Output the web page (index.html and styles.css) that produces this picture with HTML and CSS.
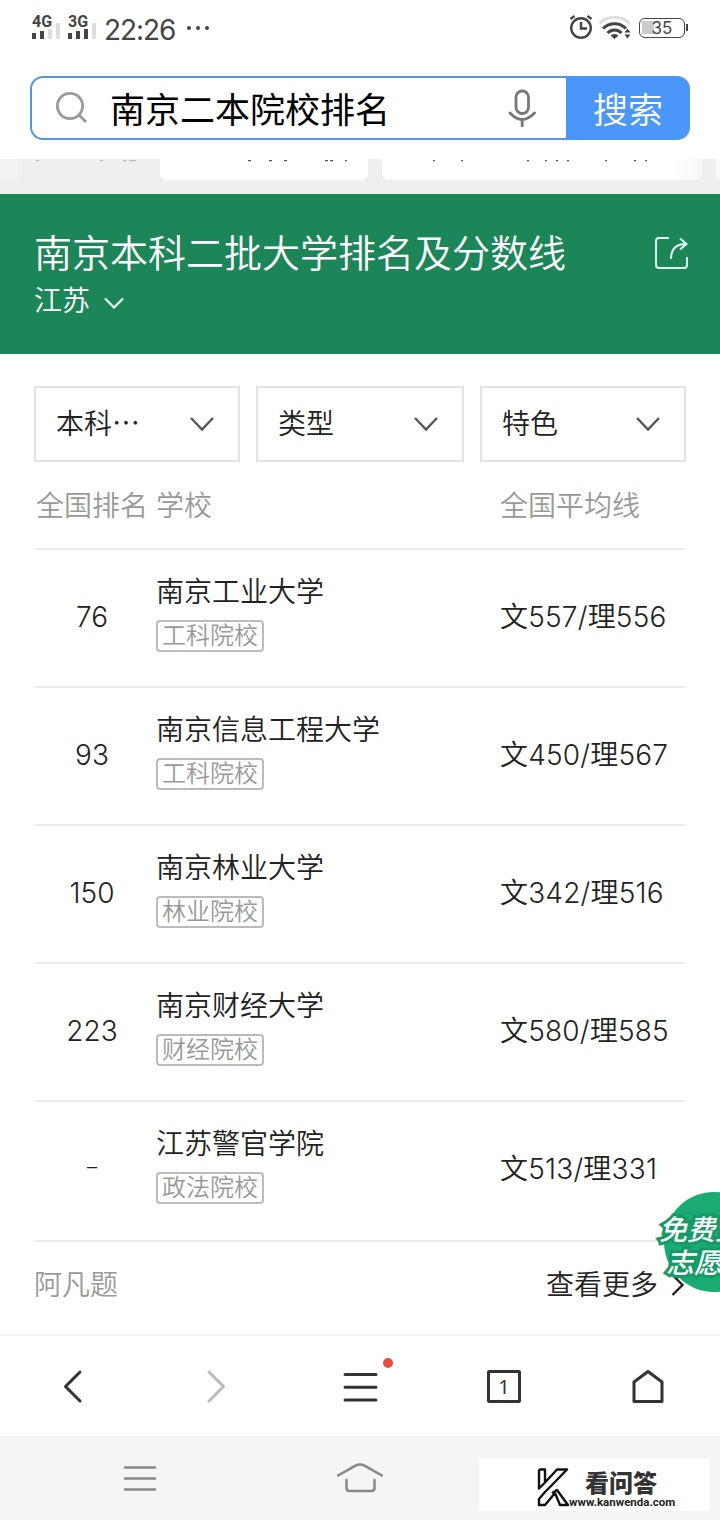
FILE: index.html
```html
<!DOCTYPE html>
<html lang="zh-CN">
<head>
    <meta charset="UTF-8">
    <meta name="viewport" content="width=device-width, initial-scale=1.0">
    <title>南京二本院校排名</title>
    <link rel="stylesheet" href="styles.css">
</head>
<body>
    <header class="status">
        <div class="signal">
            <span>4G</span>
            <svg width="28" height="18" viewBox="0 0 28 18"><path d="M2 12v6M10 10v8" stroke="#444" stroke-width="4"/><path d="M18 8v10M26 2v16" stroke="#ddd" stroke-width="4"/></svg>
        </div>
        <div class="signal">
            <span>3G</span>
            <svg width="28" height="18" viewBox="0 0 28 18"><path d="M2 12v6M10 10v8M18 8v10" stroke="#444" stroke-width="4"/><path d="M26 2v16" stroke="#ddd" stroke-width="4"/></svg>
        </div>
        <time>22:26</time>
        <svg class="more-dots" width="22" height="6" viewBox="0 0 22 6" fill="#444"><circle cx="2" cy="3" r="2"/><circle cx="11" cy="3" r="2"/><circle cx="20" cy="3" r="2"/></svg>
        <svg class="alarm" width="24" height="26" viewBox="0 0 24 26" fill="none" stroke="#444" stroke-width="2.4"><circle cx="12" cy="14" r="9.8"/><path d="M12 8v6.5h6M1.500 5l4-3M22.500 5l-4-3"/></svg>
        <svg class="wifi" width="34" height="26" viewBox="0 0 34 26" fill="none" stroke-width="3"><path d="M1.500 8.500C9.500 0 23.500 0 31.500 8.500" stroke="#ddd"/><path d="M5 13.500c6.500-6.500 16.500-6.500 23 0M9.500 18c4-4 10-4 14 0" stroke="#444"/><path d="M12.500 20.500q4-3 8 0l-4 3.500zM26.500 17.500h6l-3-4zM26.500 19.500h6l-3 4z" fill="#444"/></svg>
        <div class="battery"><span>35</span></div>
    </header>

    <div class="search">
        <div class="search-box">
            <svg width="34" height="34" viewBox="0 0 34 34" fill="none" stroke="#999" stroke-width="2.800"><circle cx="15" cy="15" r="12.600"/><path d="M24 24l7 7"/></svg>
            <span>南京二本院校排名</span>
            <svg width="28" height="38" viewBox="0 0 28 38" fill="none" stroke="#777" stroke-width="2.800" stroke-linecap="round"><rect x="8" y="2" width="12.500" height="22.500" rx="6.250"/><path d="M2 24q12 13 24.500 0M14.200 31v6"/></svg>
        </div>
        <button>搜索</button>
    </div>

    <div class="chips">
        <i class="chip-edge"></i>
        <i class="chip chip-short"></i>
        <i class="chip chip-long"></i>
        <i class="chip chip-last"></i>
        <svg class="chip-cut" width="720" height="3" viewBox="0 0 720 3">
            <path d="M36 .5h3M100 .5h3M123 .5h3M129 .5h7" stroke="#bbb" stroke-width="1.500"/>
            <path d="M248 .5h3M269 .5h3M284 .5h3M325 .5h3M330 .5h3M345 .5h2M433 .5h2M461 .5h2M527 .5h2M545 .5h2M556 .5h2M567 .5h2M605 .5h2M634 .5h2M645 .5h2" stroke="#555" stroke-width="1.500"/>
        </svg>
    </div>

    <section class="banner">
        <div>
            <h1>南京本科二批大学排名及分数线</h1>
            <div class="region">江苏 <svg width="20" height="12" viewBox="0 0 20 12" fill="none" stroke="#e9fff5" stroke-width="2.200"><path d="M1 1.500l9 9 9-9"/></svg></div>
        </div>
        <svg class="share" width="34" height="34" viewBox="0 0 34 34" fill="none" stroke="#d9fff0" stroke-width="2"><path d="M15 2H5Q2 2 2 5v24q0 3 3 3h25q3 0 3-3V21"/><path d="M17 23Q17 8 32 8M26 2.500l6.500 5.500-6.500 5.500"/></svg>
    </section>

    <main>
        <div class="filters">
            <div class="filter">本科<span class="ellipsis">⋯</span><svg width="24" height="14" viewBox="0 0 24 14"><path d="M1 1l11 11.500L23 1"/></svg></div>
            <div class="filter">类型<svg width="24" height="14" viewBox="0 0 24 14"><path d="M1 1l11 11.500L23 1"/></svg></div>
            <div class="filter">特色<svg width="24" height="14" viewBox="0 0 24 14"><path d="M1 1l11 11.500L23 1"/></svg></div>
        </div>

        <div class="row head">
            <div>全国排名</div>
            <div>学校</div>
            <div>全国平均线</div>
        </div>
        <div class="row">
            <div class="rank">76</div>
            <div class="school"><h2>南京工业大学</h2><span class="tag">工科院校</span></div>
            <div class="score">文557/理556</div>
        </div>
        <div class="row">
            <div class="rank">93</div>
            <div class="school"><h2>南京信息工程大学</h2><span class="tag">工科院校</span></div>
            <div class="score">文450/理567</div>
        </div>
        <div class="row">
            <div class="rank">150</div>
            <div class="school"><h2>南京林业大学</h2><span class="tag">林业院校</span></div>
            <div class="score">文342/理516</div>
        </div>
        <div class="row">
            <div class="rank">223</div>
            <div class="school"><h2>南京财经大学</h2><span class="tag">财经院校</span></div>
            <div class="score">文580/理585</div>
        </div>
        <div class="row last">
            <div class="rank dash">–</div>
            <div class="school"><h2>江苏警官学院</h2><span class="tag">政法院校</span></div>
            <div class="score">文513/理331</div>
        </div>
        <div class="source">
            <span>阿凡题</span>
            <a>查看更多<svg width="14" height="24" viewBox="0 0 14 24" fill="none" stroke="#222" stroke-width="2.400"><path d="M1.500 2l10 10-10 10"/></svg></a>
        </div>
        <div class="float-badge"><span>免费生</span><span class="second">志愿</span></div>
    </main>

    <nav class="toolbar">
        <svg viewBox="0 0 144 100"><path d="M80 36L65.500 50.500 80 65" stroke-width="3"/></svg>
        <svg viewBox="0 0 144 100"><path d="M65 36l14.500 14.500L65 65" stroke="#bbb" stroke-width="3"/></svg>
        <svg viewBox="0 0 144 100"><path d="M57 38.500h31M57 51.300h31M57 64h31" stroke-width="3"/><circle cx="100" cy="27" r="5" fill="#e54d42" stroke="none"/></svg>
        <div class="tabs"><span>1</span></div>
        <svg viewBox="0 0 144 100"><path d="M58 46l14-10.500L86 46v19.500H58z" stroke-width="3"/></svg>
    </nav>

    <footer class="system">
        <svg width="34" height="28" viewBox="0 0 34 28"><path d="M2 2.500h30M2 13.500h30M2 24.500h30"/></svg>
        <svg class="home" width="50" height="32" viewBox="0 0 50 32"><path d="M3 14.500L20 4.800q5-2.600 10 0l17 9.700M11.500 19v8q0 3 3 3h22q3 0 3-3v-8"/></svg>
        <div class="mark">
            <svg width="34" height="42" viewBox="0 0 34 42" fill="#fff" stroke="#111" stroke-width="2.400" stroke-linejoin="round"><path d="M3 3.500h6v13L21 3.500h10L16 19 9 26 3 33v6h6l10-12 5 12h8L21 24l-5 3M3 3.500v19l6-6"/></svg>
            <div class="mark-text"><b>看问答</b><small>www.kanwenda.com</small></div>
        </div>
    </footer>
</body>
</html>
```
FILE: styles.css
```css
* { box-sizing: border-box; }
body { margin: 0; width: 720px; height: 1520px; overflow: hidden; background: #fff; color: #222; font-family: Inter, "Noto Sans CJK SC", sans-serif; font-weight: 350; }
svg { display: block; flex: none; }
h1, h2 { margin: 0; font-weight: 350; }

.status { display: flex; height: 76px; padding: 14px 32px 0 32px; color: #444; }
.signal { width: 36px; height: 28px; font: bold 16px/15px Roboto, sans-serif; display: grid; }
.signal span, .signal svg { grid-area: 1 / 1; }
.signal svg { margin-top: 7px; }
.status time { font: 400 28px/32px Inter, sans-serif; letter-spacing: -1.1px; width: 83px; }
.more-dots { margin-top: 11px; }
.alarm { margin: 0 0 0 360px; }
.wifi { margin: 1px 0 0 5px; }
.battery { position: relative; margin: 4px 0 0 7px; width: 46px; height: 20px; flex: none; border: 1.500px solid #444; border-radius: 6px; font: 400 17px/18px Inter, sans-serif; text-align: center; background: linear-gradient(#ccc, #ccc) 2px 2px / 12px 13px no-repeat; }
.battery::after { content: ""; position: absolute; right: -4px; top: 5px; width: 2px; height: 7px; background: #444; }

.search { display: flex; height: 83px; padding: 0 30px 19px; }
.search-box { flex: 1; display: flex; align-items: center; border: 2px solid #5795dc; border-right: 0; border-radius: 13px 0 0 13px; padding: 0 30px 0 23px; font-size: 35px; font-weight: 400; color: #000; }
.search-box span { flex: 1; margin-left: 21px; line-height: 60px; padding-top: 3px; }
.search button { width: 124px; border: 0; border-radius: 0 13px 13px 0; background: #4b97f9; color: #fff; font: 350 35px/64px "Noto Sans CJK SC", sans-serif; padding: 0; }

.chips { position: relative; display: flex; height: 35px; background: #efefef; }
.chip-edge { width: 18px; height: 21px; margin-right: 142px; background: #f2f2f2; }
.chip { height: 21px; background: #fff; border-radius: 0 0 7px 7px; }
.chip-short { width: 208px; margin-right: 14px; }
.chip-long { width: 320px; margin-right: 14px; background: linear-gradient(90deg, #fff 90%, #f8f8f8); }
.chip-last { width: 4px; border-radius: 0 0 0 4px; background: #f8f8f8; }
.chip-cut { position: absolute; left: 0; top: 1px; }

.banner { display: flex; justify-content: space-between; height: 160px; padding: 34px 32px 0 34px; background: #1d8658; color: #fff; }
.banner h1 { font-size: 38px; line-height: 50px; height: 54px; }
.region { display: flex; align-items: center; font-size: 28px; line-height: 38px; }
.region svg { margin: 3px 0 0 14px; }
.share { margin-top: 8px; }

main { position: relative; height: 980px; padding: 32px 34px 0; overflow: hidden; }
.filters { display: grid; grid-template-columns: 206px 208px 206px; gap: 16px; }
.filter { display: flex; align-items: center; height: 76px; border: 2px solid #e3e3e3; padding: 0 24px 5px 20px; font-size: 28px; }
.filter svg { margin: 5px 0 0 auto; fill: none; stroke: #555; stroke-width: 2.400; }
.ellipsis { font-family: "Noto Sans CJK SC", sans-serif; }

.row { display: grid; grid-template-columns: 122px 344px 1fr; align-items: center; height: 138px; border-bottom: 2px solid #ececec; font-size: 28px; white-space: nowrap; }
.row.head { height: 88px; color: #999; padding: 0 0 2px 2px; grid-template-columns: 120px 344px 1fr; }
.rank { width: 116px; text-align: center; padding-bottom: 2px; }
.rank.dash { padding-bottom: 6px; font-size: 20px; }
.school { padding-bottom: 12px; }
.school h2 { font-size: 28px; line-height: 40px; }
.tag { display: block; width: 108px; height: 32px; margin-top: 8px; border: 2px solid #bbb; border-radius: 4px; color: #999; font-size: 24px; line-height: 28px; text-align: center; }
.score { letter-spacing: 0.2px; padding-bottom: 6px; }
.row.last { height: 140px; padding-bottom: 2px; }
.source { display: flex; justify-content: space-between; height: 86px; font-size: 28px; line-height: 87px; color: #999; }
.source a { display: flex; align-items: center; color: #222; }
.source svg { margin: 0 1px 0 13px; }

.float-badge { position: absolute; left: 664px; top: 838px; width: 100px; height: 100px; border-radius: 50%; background: #1aab72; color: #fff; font-size: 28px; font-weight: 500; font-style: italic; line-height: 33px; padding-top: 22px; white-space: nowrap; }
.float-badge span { display: block; margin-left: -5px; -webkit-text-stroke: 6px #159a66; paint-order: stroke fill; }
.float-badge .second { margin-left: 2px; }

.toolbar { display: grid; grid-template-columns: repeat(5, 144px); height: 102px; border-top: 2px solid #f4f4f4; }
.toolbar svg { width: 144px; height: 100px; fill: none; stroke: #333; stroke-linecap: round; stroke-linejoin: round; }
.tabs { display: flex; justify-content: center; padding-top: 34px; }
.tabs span { width: 34px; height: 33px; border: 3px solid #333; border-radius: 2px; font: 400 20px/27px "Noto Sans", sans-serif; text-align: center; color: #333; }

.system { display: flex; height: 84px; background: #f5f5f5; padding: 22px 10px 0 123px; }
.system > svg { fill: none; stroke: #888; stroke-width: 2.500; stroke-linecap: round; margin-top: 7px; }
.system .home { margin: 3px 94px 0 178px; }
.mark { display: flex; width: 231px; height: 53px; background: #fff; padding: 8px 0 0 57px; }
.mark-text { margin-left: -1px; width: 112px; }
.mark b { display: block; margin-left: 16px; font: 900 24px/32px "Noto Sans CJK SC", sans-serif; color: #333; white-space: nowrap; }
.mark small { display: block; margin-top: -2px; font: bold 11.500px/12px Roboto, sans-serif; color: #222; }
```
